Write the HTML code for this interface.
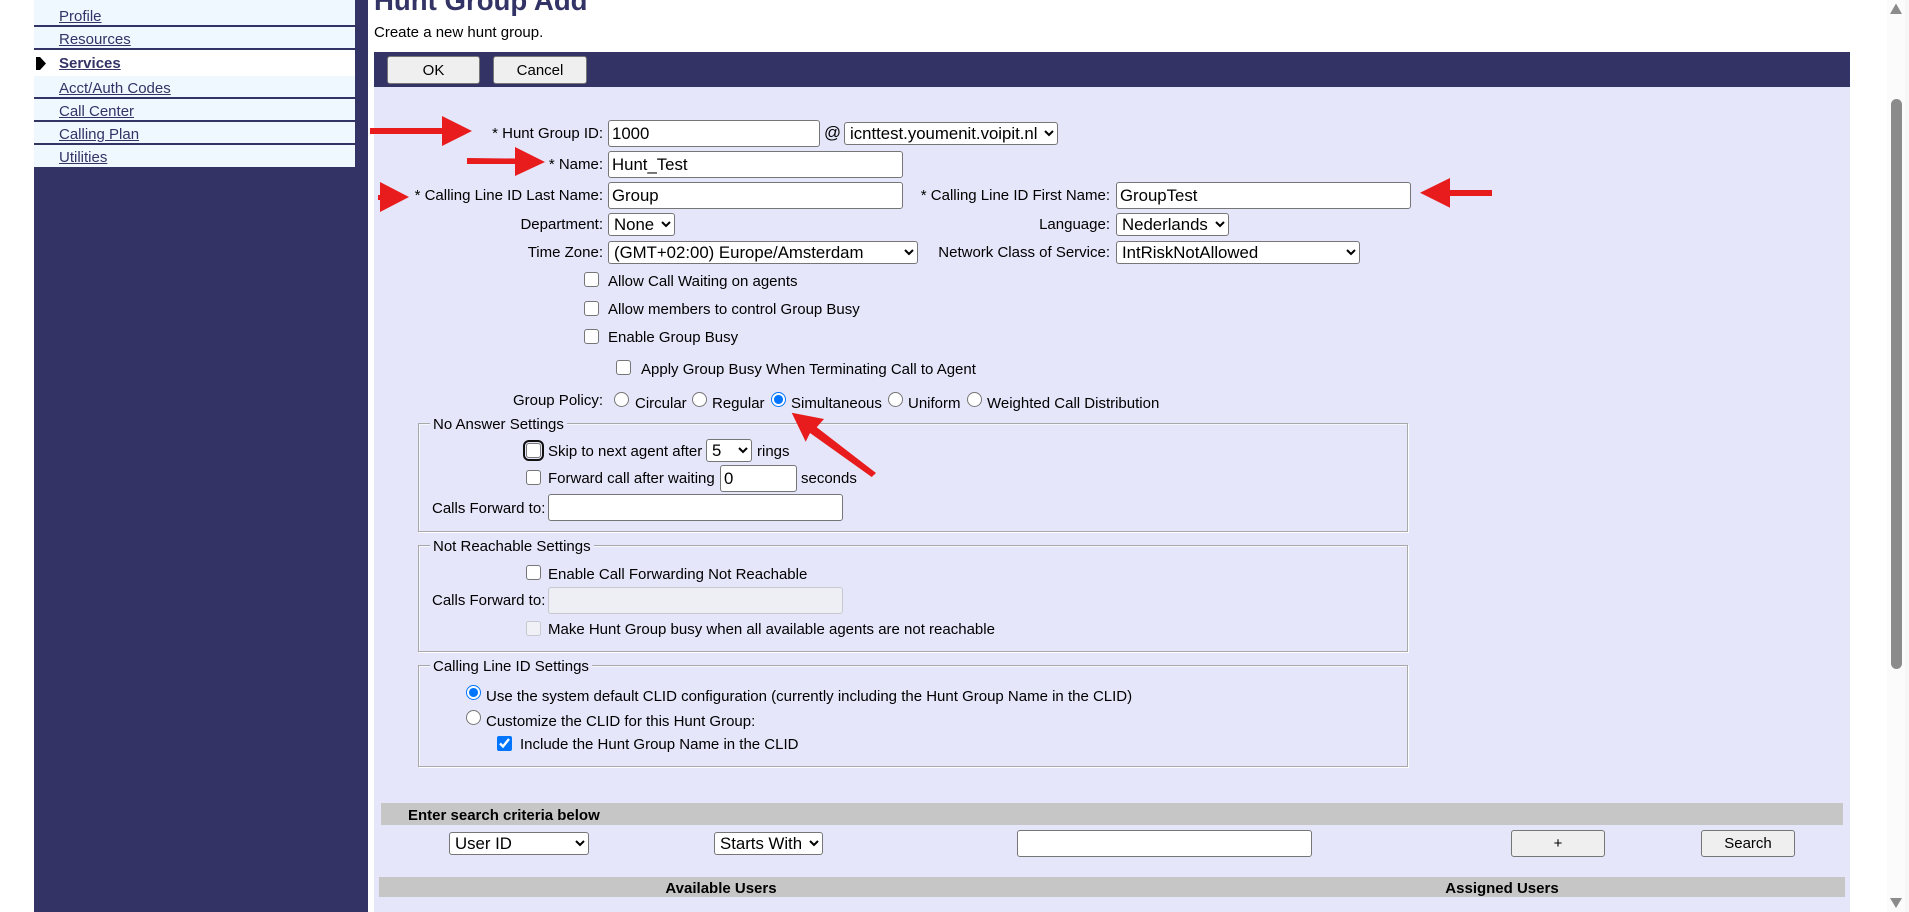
<!DOCTYPE html>
<html><head><meta charset="utf-8"><title>Hunt Group Add</title>
<style>
html,body{margin:0;padding:0;background:#fff;width:1909px;height:912px;overflow:hidden}
body{position:relative;font-family:"Liberation Sans",Arial,sans-serif;font-size:15px;color:#000}
.a{position:absolute}
.t{position:absolute;white-space:nowrap;line-height:18px;height:18px}
.r{position:absolute;white-space:nowrap;line-height:18px;height:18px;text-align:right}
.nav{position:absolute;left:34px;width:321px;background:#f0f8ff;border-bottom:2px solid #333366;box-sizing:border-box}
.nav a{position:absolute;left:25px;top:5px;line-height:18px;color:#333366;text-decoration:underline;font-size:15px}
input,select,button{position:absolute;margin:0;box-sizing:border-box;font-family:"Liberation Sans",Arial,sans-serif}
input[type=text]{font-size:16.8px;padding:1px 3px;background:#fff;border-width:1.5px;border-style:solid;border-color:#767676;border-radius:3px;color:#000}
select{font-size:16.8px;background:#fff;border:1px solid #767676;border-radius:3px;color:#000;padding:0 0 0 1px}
button{font-size:15px;background:#efefef;border:1.5px solid #767676;border-radius:3px;color:#000;padding:0}
input[type=checkbox],input[type=radio]{width:15px;height:15px}
input.cb{appearance:none;-webkit-appearance:none;background:#fff;border:1.3px solid #767676;border-radius:3px}
input.rd{appearance:none;-webkit-appearance:none;background:#fff;border:1.3px solid #767676;border-radius:50%}
input.rd:checked{border-color:#0075ff;background:radial-gradient(circle,#0075ff 0,#0075ff 4.2px,#fff 4.8px)}
.fs{position:absolute;left:418px;width:990px;box-sizing:border-box;border:1px solid #a9a9a9;box-shadow:inset 1px 1px 0 #f6f6ff,1px 1px 0 #fff}
.lg{position:absolute;background:#e6e6fa;padding:0 3px;line-height:18px;white-space:nowrap}
.bar{position:absolute;background:#c6c6c6}
b.t{color:#000}
</style></head><body>
<!-- sidebar -->
<div class="a" style="left:34px;top:0;width:334px;height:912px;background:#333366"></div>
<div class="a" style="left:34px;top:0;width:321px;height:3px;background:#f0f8ff"></div>
<div class="nav" style="top:3px;height:24px"><a href="#">Profile</a></div>
<div class="nav" style="top:27px;height:23px"><a href="#" style="top:4px">Resources</a></div>
<div class="a" style="left:34px;top:50px;width:321px;height:26px;background:#fff">
<svg class="a" style="left:2px;top:7px" width="10" height="13"><path d="M0 0 L4 0 L10 6.500 L4 13 L0 13Z" fill="#000"/></svg>
<a href="#" class="a" style="left:25px;top:5px;line-height:18px;font-weight:bold;color:#333366;text-decoration:underline;font-size:15px">Services</a></div>
<div class="nav" style="top:76px;height:23px"><a href="#" style="top:4px">Acct/Auth Codes</a></div>
<div class="nav" style="top:99px;height:23px"><a href="#" style="top:4px">Call Center</a></div>
<div class="nav" style="top:122px;height:23px"><a href="#" style="top:4px">Calling Plan</a></div>
<div class="a" style="left:34px;top:145px;width:321px;height:22px;background:#f0f8ff"><a href="#" class="a" style="left:25px;top:4px;line-height:18px;color:#333366;text-decoration:underline;font-size:15px">Utilities</a></div>

<!-- heading -->
<div class="a" style="left:374px;top:-15px;font-size:27.6px;font-weight:bold;color:#333366;line-height:32px;white-space:nowrap">Hunt Group Add</div>
<div class="t" style="left:374px;top:24px">Create a new hunt group.</div>

<!-- panel -->
<div class="a" style="left:374px;top:52px;width:1476px;height:860px;background:#e6e6fa"></div>
<div class="a" style="left:374px;top:52px;width:1476px;height:35px;background:#333366"></div>
<button style="left:387px;top:56px;width:93px;height:28px">OK</button>
<button style="left:493px;top:56px;width:94px;height:28px">Cancel</button>

<!-- main fields -->
<div class="r" style="right:1306px;top:125px">* Hunt Group ID:</div>
<input type="text" value="1000" style="left:608px;top:120px;width:212px;height:27px">
<div class="t" style="left:824px;top:124px;font-size:16.8px">@</div>
<select style="left:844px;top:122px;width:214px;height:23px"><option>icnttest.youmenit.voipit.nl</option></select>
<div class="r" style="right:1306px;top:156px">* Name:</div>
<input type="text" value="Hunt_Test" style="left:608px;top:151px;width:295px;height:27px">
<div class="r" style="right:1306px;top:187px">* Calling Line ID Last Name:</div>
<input type="text" value="Group" style="left:608px;top:182px;width:295px;height:27px">
<div class="r" style="right:799px;top:187px">* Calling Line ID First Name:</div>
<input type="text" value="GroupTest" style="left:1116px;top:182px;width:295px;height:27px">
<div class="r" style="right:1306px;top:216px">Department:</div>
<select style="left:608px;top:213px;width:67px;height:23px"><option>None</option></select>
<div class="r" style="right:799px;top:216px">Language:</div>
<select style="left:1116px;top:213px;width:113px;height:23px"><option>Nederlands</option></select>
<div class="r" style="right:1306px;top:244px">Time Zone:</div>
<select style="left:608px;top:241px;width:310px;height:23px"><option>(GMT+02:00) Europe/Amsterdam</option></select>
<div class="r" style="right:799px;top:244px">Network Class of Service:</div>
<select style="left:1116px;top:241px;width:244px;height:23px"><option>IntRiskNotAllowed</option></select>

<input class="cb" type="checkbox" style="left:584px;top:272px"><div class="t" style="left:608px;top:273px">Allow Call Waiting on agents</div>
<input class="cb" type="checkbox" style="left:584px;top:301px"><div class="t" style="left:608px;top:301px">Allow members to control Group Busy</div>
<input class="cb" type="checkbox" style="left:584px;top:329px"><div class="t" style="left:608px;top:329px">Enable Group Busy</div>
<input class="cb" type="checkbox" style="left:616px;top:360px"><div class="t" style="left:641px;top:361px">Apply Group Busy When Terminating Call to Agent</div>

<div class="r" style="right:1306px;top:392px">Group Policy:</div>
<input class="rd" type="radio" name="gp" style="left:614px;top:392px"><div class="t" style="left:635px;top:395px">Circular</div>
<input class="rd" type="radio" name="gp" style="left:692px;top:392px"><div class="t" style="left:712px;top:395px">Regular</div>
<input class="rd" type="radio" name="gp" checked style="left:771px;top:392px"><div class="t" style="left:791px;top:395px">Simultaneous</div>
<input class="rd" type="radio" name="gp" style="left:888px;top:392px"><div class="t" style="left:908px;top:395px">Uniform</div>
<input class="rd" type="radio" name="gp" style="left:967px;top:392px"><div class="t" style="left:987px;top:395px">Weighted Call Distribution</div>

<!-- fieldset 1 -->
<div class="fs" style="top:423px;height:109px"></div>
<div class="lg" style="left:430px;top:416px">No Answer Settings</div>
<input class="cb" type="checkbox" style="left:526px;top:443px;outline:2.5px solid #101010;outline-offset:1px">
<div class="t" style="left:548px;top:443px">Skip to next agent after</div>
<select style="left:706px;top:439px;width:46px;height:23px"><option>5</option></select>
<div class="t" style="left:757px;top:443px">rings</div>
<input class="cb" type="checkbox" style="left:526px;top:470px"><div class="t" style="left:548px;top:470px">Forward call after waiting</div>
<input type="text" value="0" style="left:720px;top:465px;width:77px;height:27px">
<div class="t" style="left:801px;top:470px">seconds</div>
<div class="t" style="left:432px;top:500px">Calls Forward to:</div>
<input type="text" style="left:548px;top:494px;width:295px;height:27px">

<!-- fieldset 2 -->
<div class="fs" style="top:545px;height:107px"></div>
<div class="lg" style="left:430px;top:538px">Not Reachable Settings</div>
<input class="cb" type="checkbox" style="left:526px;top:565px"><div class="t" style="left:548px;top:566px">Enable Call Forwarding Not Reachable</div>
<div class="t" style="left:432px;top:592px">Calls Forward to:</div>
<input type="text" disabled style="left:548px;top:587px;width:295px;height:27px;background:#eeeef5;border-color:#c8c8d0">
<input type="checkbox" disabled style="left:526px;top:621px"><div class="t" style="left:548px;top:621px">Make Hunt Group busy when all available agents are not reachable</div>

<!-- fieldset 3 -->
<div class="fs" style="top:665px;height:102px"></div>
<div class="lg" style="left:430px;top:658px">Calling Line ID Settings</div>
<input class="rd" type="radio" name="cl" checked style="left:466px;top:685px"><div class="t" style="left:486px;top:688px">Use the system default CLID configuration (currently including the Hunt Group Name in the CLID)</div>
<input class="rd" type="radio" name="cl" style="left:466px;top:710px"><div class="t" style="left:486px;top:713px">Customize the CLID for this Hunt Group:</div>
<input type="checkbox" checked style="left:497px;top:736px"><div class="t" style="left:520px;top:736px">Include the Hunt Group Name in the CLID</div>

<!-- search -->
<div class="bar" style="left:381px;top:803px;width:1462px;height:22px"></div>
<b class="t" style="left:408px;top:807px">Enter search criteria below</b>
<select style="left:449px;top:832px;width:140px;height:23px"><option>User ID</option></select>
<select style="left:714px;top:832px;width:109px;height:23px"><option>Starts With</option></select>
<input type="text" style="left:1017px;top:830px;width:295px;height:27px">
<button style="left:1511px;top:830px;width:94px;height:27px">+</button>
<button style="left:1701px;top:830px;width:94px;height:27px">Search</button>
<div class="bar" style="left:379px;top:877px;width:1466px;height:20px"></div>
<b class="t" style="left:621px;width:200px;text-align:center;top:880px">Available Users</b>
<b class="t" style="left:1402px;width:200px;text-align:center;top:880px">Assigned Users</b>

<!-- scrollbar -->
<div class="a" style="left:1887px;top:0;width:18px;height:912px;background:#fbfbfb"></div>
<div class="a" style="left:1905px;top:0;width:4px;height:912px;background:#f6f6f6"></div>
<div class="a" style="left:1891px;top:99px;width:11px;height:570px;background:#8b8b8b;border-radius:6px"></div>
<svg class="a" style="left:1887px;top:0" width="18" height="912"><path d="M9 3.500 L15 14 L3 14Z" fill="#8b8b8b"/><path d="M3 898 L15 898 L9 908Z" fill="#8b8b8b"/></svg>

<!-- red arrows -->
<svg class="a" style="left:0;top:0;pointer-events:none" width="1909" height="912">
<g fill="#e81c1c">
<path d="M370 128 L442 128 L442 116 L472 131 L442 146 L442 134 L370 134Z"/>
<path d="M467 158 L515 158.500 L515 147 L545 162 L515 176 L515 164 L467 164Z"/>
<path d="M378 195 L380 195 L380 182 L409 197 L380 212 L380 200 L378 200Z"/>
<path d="M1420 192.700 L1450 178 L1450 190 L1492 190 L1492 196 L1450 196 L1450 207.700Z"/>
<path d="M791.700 412.700 L824 419 L816.700 427.300 L876 473 L871.700 477 L810 433 L805.700 441.700Z"/>
</g></svg>
</body></html>
